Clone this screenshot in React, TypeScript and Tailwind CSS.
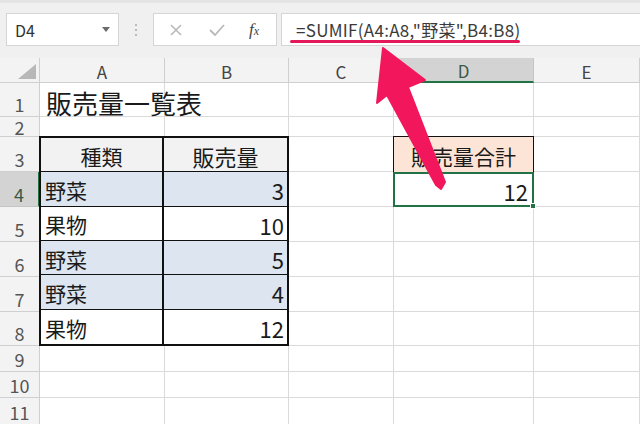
import React from 'react';

const FONT = "font-['Noto_Sans_CJK_JP','Noto_Sans',sans-serif]";

const ROW = [
  'row-start-1', 'row-start-2', 'row-start-3', 'row-start-4', 'row-start-5', 'row-start-6',
  'row-start-7', 'row-start-8', 'row-start-9', 'row-start-10', 'row-start-11', 'row-start-12',
];
const COL = ['col-start-1', 'col-start-2', 'col-start-3', 'col-start-4', 'col-start-5', 'col-start-6'];
const LETTERS = ['', 'A', 'B', 'C', 'D', 'E'];

type TableRow = { label: string; value: string; kind: 'head' | 'blue' | 'white' };

const tableRows: TableRow[] = [
  { label: '種類', value: '販売量', kind: 'head' },
  { label: '野菜', value: '3', kind: 'blue' },
  { label: '果物', value: '10', kind: 'white' },
  { label: '野菜', value: '5', kind: 'blue' },
  { label: '野菜', value: '4', kind: 'blue' },
  { label: '果物', value: '12', kind: 'white' },
];

const rowBg: Record<TableRow['kind'], string> = {
  head: 'bg-[#f2f2f2]',
  blue: 'bg-[#dce5f0]',
  white: 'bg-white',
};

// grid background: headers + empty cells with gridlines
const SheetCell: React.FC<{ r: number; c: number }> = ({ r, c }) => {
  const pos = `${ROW[r]} ${COL[c]}`;

  if (r === 0 && c === 0) {
    return (
      <div className={`${pos} relative bg-[#f3f3f3] border-r border-b border-[#cfcfcf]`}>
        <svg className="absolute right-[3px] bottom-[3px]" width="18" height="15" viewBox="0 0 18 15">
          <polygon points="18,0 18,15 0,15" fill="#b8b8b8" />
        </svg>
      </div>
    );
  }

  if (r === 0) {
    const selected = c === 4;
    return (
      <div
        className={`${pos} flex items-center justify-center pt-[2px] text-[17px] leading-none border-r ${
          selected
            ? 'bg-[#d3d3d3] text-[#3d5747] border-b-2 border-b-[#217346] border-r-[#c4c4c4]'
            : 'bg-[#f3f3f3] text-[#444] border-b border-[#cfcfcf]'
        }`}
      >
        {LETTERS[c]}
      </div>
    );
  }

  if (c === 0) {
    const selected = r === 4;
    return (
      <div
        className={`${pos} flex items-end justify-center text-[18px] leading-none overflow-hidden border-b ${
          r === 2 ? 'pb-0 text-[17px]' : 'pb-[3px]'
        } ${
          selected
            ? 'bg-[#d3d3d3] text-[#3d5747] border-r-2 border-r-[#217346] border-b-[#c4c4c4]'
            : 'bg-[#f3f3f3] text-[#555] border-r border-[#cfcfcf]'
        }`}
      >
        {r}
      </div>
    );
  }

  return <div className={`${pos} bg-white border-r border-b border-[#dadada]`} />;
};

const Toolbar: React.FC = () => (
  <div className="flex h-[58px] items-start bg-[#f0f0f0] pt-[10px] border-t-[3px] border-[#e4e4e4]">
    {/* Name box */}
    <div className="ml-[6px] flex h-[33px] w-[113px] shrink-0 items-center justify-between border border-[#d5d5d5] bg-white pl-[8px] pr-[8px]">
      <span className="text-[16px] text-[#333]">D4</span>
      <svg width="8" height="5" viewBox="0 0 8 5">
        <polygon points="0,0 8,0 4,5" fill="#6b6b6b" />
      </svg>
    </div>

    {/* separator dots */}
    <div className="flex h-[33px] w-[34px] shrink-0 flex-col items-center justify-center gap-[3px]">
      <span className="h-[2px] w-[2px] rounded-full bg-[#a8a8a8]" />
      <span className="h-[2px] w-[2px] rounded-full bg-[#a8a8a8]" />
      <span className="h-[2px] w-[2px] rounded-full bg-[#a8a8a8]" />
    </div>

    {/* cancel / enter / fx */}
    <div className="flex h-[33px] w-[124px] shrink-0 items-center border border-[#d5d5d5] bg-white">
      <svg className="ml-[15px]" width="14" height="12" viewBox="0 0 14 12">
        <path d="M2 1l10 10M12 1L2 11" stroke="#b9b9b9" strokeWidth="1.6" fill="none" />
      </svg>
      <svg className="ml-[26px]" width="16" height="12" viewBox="0 0 16 12">
        <path d="M1 6l5 5L15 1" stroke="#b9b9b9" strokeWidth="1.8" fill="none" />
      </svg>
      <span className="ml-[24px] font-['Liberation_Serif',serif] text-[17px] italic leading-none text-[#444]">
        f<span className="text-[12px]">x</span>
      </span>
    </div>

    {/* formula bar */}
    <div className="relative ml-[4px] flex h-[33px] w-[370px] shrink-0 items-center border border-[#d5d5d5] bg-white pl-[14px]">
      <span className="text-[17px] leading-none text-[#3a3a3a] tracking-[0.3px]">=SUMIF(A4:A8,"野菜",B4:B8)</span>
      <span className="absolute left-[8px] top-[26px] h-[3px] w-[230px] rounded-full bg-[#e3195a]" />
    </div>
  </div>
);

const App: React.FC = () => {
  const cells: React.ReactNode[] = [];
  for (let r = 0; r < 12; r++) {
    for (let c = 0; c < 6; c++) {
      cells.push(<SheetCell key={`${r}-${c}`} r={r} c={c} />);
    }
  }

  return (
    <div className={`relative h-[424px] w-[640px] overflow-hidden bg-white ${FONT}`}>
      <Toolbar />

      <div className="grid grid-cols-[40px_125px_124px_105px_140px_106px] grid-rows-[25px_34px_20px_35px_35px_35px_35px_35px_34px_26px_26px_27px]">
        {cells}

        {/* A1 title */}
        <div className="row-start-2 col-start-2 col-span-3 flex items-end pb-[1px] pl-[6px] text-[26px] leading-none text-[#1a1a1a] z-10">
          販売量一覧表
        </div>

        {/* table A3:B8 */}
        <div className="row-start-4 row-span-6 col-start-2 col-span-2 -ml-px -mt-px grid grid-cols-[123px_1fr] grid-rows-6 border-2 border-[#111] z-10">
          {tableRows.map((row, i) => {
            const last = i === tableRows.length - 1;
            const isHead = row.kind === 'head';
            return (
              <React.Fragment key={i}>
                <div
                  className={`flex items-center pt-[3px] text-[21px] leading-none text-[#1a1a1a] border-r-2 border-[#111] ${
                    last ? '' : 'border-b'
                  } ${rowBg[row.kind]} ${isHead ? 'justify-center' : 'pl-[4px]'}`}
                >
                  {row.label}
                </div>
                <div
                  className={`flex items-center pt-[3px] text-[22px] leading-none text-[#1a1a1a] border-[#111] ${
                    last ? '' : 'border-b'
                  } ${rowBg[row.kind]} ${isHead ? 'justify-center text-[21px]' : 'justify-end pr-[3px]'}`}
                >
                  {row.value}
                </div>
              </React.Fragment>
            );
          })}
        </div>

        {/* D3:D4 */}
        <div className="row-start-4 row-span-2 col-start-5 -ml-px -mt-px flex flex-col z-10">
          <div className="flex h-[36px] items-center justify-center border border-b-0 border-[#111] bg-[#fce4d6] pt-[3px] text-[21px] leading-none text-[#1a1a1a]">
            販売量合計
          </div>
          <div className="relative flex flex-1 items-center justify-end border-2 border-[#217346] bg-white pr-[4px] pt-[3px] text-[22px] leading-none text-[#1a1a1a]">
            12
            <span className="absolute -bottom-[4px] -right-[4px] h-[6px] w-[6px] border border-white bg-[#217346]" />
          </div>
        </div>
      </div>

      {/* pink arrow */}
      <svg className="absolute left-0 top-0 z-20" width="640" height="424" viewBox="0 0 640 424">
        <polygon
          points="383,48 425,80 408,87 445,182 441,189 436,185 387,95 377,103"
          fill="#f2175c"
          strokeLinejoin="round"
          stroke="#f2175c"
          strokeWidth="2"
        />
      </svg>
    </div>
  );
};

export default App;
